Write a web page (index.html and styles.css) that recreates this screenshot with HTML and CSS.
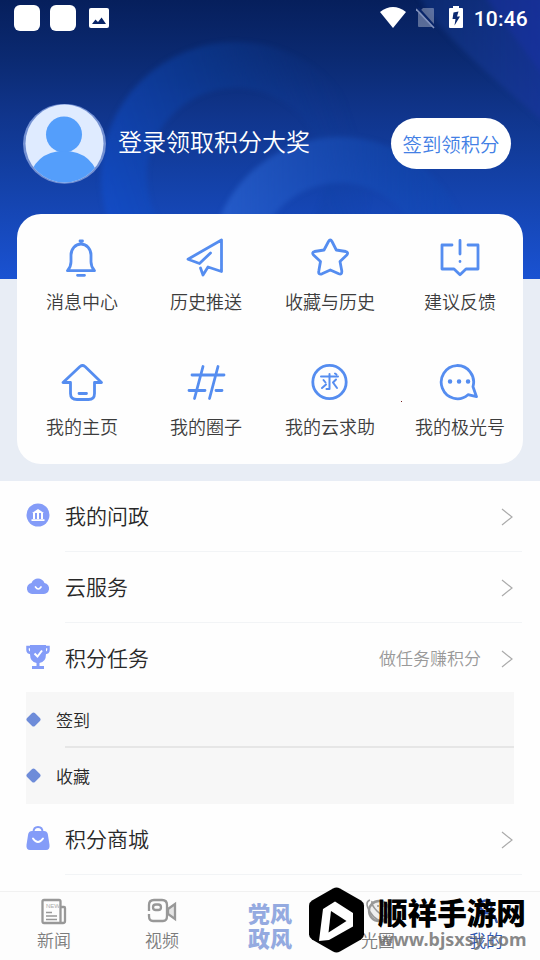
FILE: index.html
```html
<!DOCTYPE html>
<html lang="zh-CN">
<head>
<meta charset="utf-8">
<title>我的</title>
<link rel="stylesheet" href="styles.css">
</head>
<body>
<div class="screen">
  <header class="hero">
    <svg class="hero-art" viewBox="0 0 540 279" width="540" height="279">
      <defs>
        <linearGradient id="ring" gradientUnits="userSpaceOnUse" x1="100" y1="190" x2="350" y2="110"><stop offset="0" stop-color="#1250d0" stop-opacity=".55"/><stop offset=".55" stop-color="#0c409f" stop-opacity=".45"/><stop offset="1" stop-color="#10409f" stop-opacity="0"/></linearGradient>
        <linearGradient id="ring2" gradientUnits="userSpaceOnUse" x1="220" y1="0" x2="450" y2="0"><stop offset="0" stop-color="#2d66d4" stop-opacity=".65"/><stop offset=".5" stop-color="#1c54c0" stop-opacity=".5"/><stop offset="1" stop-color="#0c4cb8" stop-opacity=".2"/></linearGradient>
        <linearGradient id="corner" x1="0" y1="0" x2="1" y2="0"><stop offset="0" stop-color="#153c8e" stop-opacity=".4"/><stop offset="1" stop-color="#18359c" stop-opacity=".75"/></linearGradient>
        <filter id="soft" filterUnits="userSpaceOnUse" x="-20" y="-20" width="600" height="420" color-interpolation-filters="sRGB"><feGaussianBlur stdDeviation="2.5"/></filter>
      </defs>
      <g filter="url(#soft)">
        <circle cx="236" cy="177" r="112" fill="none" stroke="url(#ring)" stroke-width="46"/>
        <circle cx="340" cy="267" r="107" fill="none" stroke="url(#ring2)" stroke-width="46"/>
        <path d="M418 -5C440 35 490 75 550 128V-5Z" fill="url(#corner)"/>
        <path d="M484 -5Q520 45 550 85V-5Z" fill="#1c33aa" opacity=".4"/>
      </g>
    </svg>
    <div class="status">
      <span class="app-square"></span><span class="app-square"></span>
      <svg class="pic" width="20" height="20" viewBox="0 0 20 20"><rect width="20" height="20" rx="2" fill="#fff"/><path d="M3 16 6.500 11.500l2.500 2.500L12.600 9.500 17 16Z" fill="#082466"/></svg>
      <span class="grow"></span>
      <svg class="wifi" width="26" height="21" viewBox="0 0 26 21"><path d="M0 5Q13-5 26 5L13 21Z" fill="#fff"/></svg>
      <svg class="sim" width="20" height="22" viewBox="0 0 20 22"><path d="M7 1h10q1 0 1 1v17q0 1-1 1H3q-1 0-1-1V6Z" fill="#fff" opacity=".33"/><path d="M2 1 20 21" stroke="#09256a" stroke-width="2.500"/><path d="M0 2 18 21" stroke="#8292bd" stroke-width="1.600"/></svg>
      <svg class="battery" width="14" height="22" viewBox="0 0 14 22"><path d="M4 0h6v2h3q1 0 1 1v18q0 1-1 1H1q-1 0-1-1V3q0-1 1-1h3Z" fill="#fff"/><path d="M9.500 5.500 4.500 6.500 3.500 13h3L5.500 19.500 11 10.500H8Z" fill="#0a2870"/></svg>
      <span class="clock">10:46</span>
    </div>
    <div class="profile">
      <svg class="avatar" width="84" height="82" viewBox="0 0 84 82"><defs><clipPath id="face"><ellipse cx="41.500" cy="39.500" rx="39" ry="39"/></clipPath></defs><ellipse cx="41.500" cy="39.800" rx="41.500" ry="40" fill="#7390d2"/><g clip-path="url(#face)"><rect width="84" height="82" fill="#dfebff"/><circle cx="41" cy="30.500" r="18" fill="#549efb"/><path d="M4 82Q10 47 41 47T78 82Z" fill="#549efb"/></g></svg>
      <span class="login">登录领取积分大奖</span>
      <button class="sign">签到领积分</button>
    </div>
  </header>

  <section class="card">
    <div class="tile"><svg width="44" height="44" viewBox="0 0 44 44"><path d="M20 5h2.500M17.500 39.300h7M7.500 34.700h27q-3.500-4-3.500-9V19a10 11 0 0 0-20 0v6.700q0 5-3.500 9Z"/></svg><span>消息中心</span></div>
    <div class="tile"><svg width="44" height="44" viewBox="0 0 44 44"><path d="M26.500 17 15.500 27.500 4 23.200 37.500 4V35.500L24 31 19 39 16.500 32"/></svg><span>历史推送</span></div>
    <div class="tile"><svg width="44" height="44" viewBox="0 0 44 44"><path d="M20.500 5.500q1.800-3 3.500 0l4.300 8.500 9.500 1.500q3 .8 1 3.500L32 25.500 33.800 35q.2 4-3 2.800L22.300 34 14 37.800q-4 1-3.200-2.800L12.500 25.500 5.500 19q-2-2.700 1-3.500L16 14Z"/></svg><span>收藏与历史</span></div>
    <div class="tile"><svg width="44" height="44" viewBox="0 0 44 44"><path d="M14 9H4v24h12l6 5.800 6-5.800h12V9H30M22 4.500v13.500M22 25.500v.1"/></svg><span>建议反馈</span></div>
    <div class="tile"><svg width="44" height="44" viewBox="0 0 44 44"><path d="M10.500 21.500H3L20 5.500q2.500-2 5 0L41.500 21.500H34.500V32.500q0 6-6 6H17q-6.500 0-6.500-6ZM19 32.500h7.500"/></svg><span>我的主页</span></div>
    <div class="tile"><svg width="44" height="44" viewBox="0 0 44 44"><path d="M19 5.500 10.500 37.500M34 5.500 25.500 37.500M8 14h32M5 29.500h16M32 29.500h6"/></svg><span>我的圈子</span></div>
    <div class="tile"><svg width="44" height="44" viewBox="0 0 44 44"><circle cx="21.500" cy="21" r="16.700"/><path d="M13 15.500h17M21.500 13v15h-3M27 12.500l1.500 1M15.500 19l2 2.500M14 27l4-3.500M28 18.500l-3 3 4 5.500" stroke-width="2"/></svg><span>我的云求助</span></div>
    <div class="tile"><svg width="44" height="44" viewBox="0 0 44 44"><path d="M30 34.500A16.200 16.600 0 1 1 35 26.500L38.500 36.500Z" transform="translate(0 -.8)"/><path d="M12 20.500h.1M21 20.500h.1M30 20.500h.1" stroke-width="4.400"/></svg><span>我的极光号</span></div>
    <i class="speck"></i>
  </section>

  <main class="list">
    <div class="row"><svg width="24" height="24" viewBox="0 0 24 24"><circle cx="12" cy="12" r="11.500" fill="#849cf8"/><path d="M6 10 12 6l6 4ZM7 10h2v6H7ZM11 10h2v6h-2ZM15 10h2v6h-2ZM5.500 16.200h13V18h-13Z" fill="#fff"/></svg><span class="name">我的问政</span><svg class="arrow" width="12" height="18" viewBox="0 0 12 18"><path d="M1 1 11 9 1 17"/></svg></div>
    <div class="row"><svg width="24" height="24" viewBox="0 0 24 24"><path d="M7.500 20a5.500 5.500 0 0 1-2-11C7.500 3 16.500 3 18.500 9A5.500 5.500 0 0 1 16.500 20Z" fill="#849cf8"/><path d="M9.500 13q2.800 4 5.500 0" fill="none" stroke="#fff" stroke-width="1.700" stroke-linecap="round"/></svg><span class="name">云服务</span><svg class="arrow" width="12" height="18" viewBox="0 0 12 18"><path d="M1 1 11 9 1 17"/></svg></div>
    <div class="row last"><svg width="24" height="26" viewBox="0 0 24 26"><path d="M5 3H1.500v3q0 3 4 3M19 3h3.500v3q0 3-4 3" fill="none" stroke="#849cf8" stroke-width="2.500"/><path d="M4 1h16v9q0 8-6.500 9v3H18v3H6v-3h4.500v-3Q4 18 4 10Z" fill="#849cf8"/><path d="m8.500 9.500 3 3L16 6.500" fill="none" stroke="#fff" stroke-width="2"/></svg><span class="name">积分任务</span><span class="hint">做任务赚积分</span><svg class="arrow" width="12" height="18" viewBox="0 0 12 18"><path d="M1 1 11 9 1 17"/></svg></div>
    <div class="sub">
      <div class="subrow"><svg width="15" height="15" viewBox="0 0 15 15"><path d="M7.500 2.500 12.500 7.500 7.500 12.500 2.500 7.500Z"/></svg><span>签到</span></div>
      <div class="subrow"><svg width="15" height="15" viewBox="0 0 15 15"><path d="M7.500 2.500 12.500 7.500 7.500 12.500 2.500 7.500Z"/></svg><span>收藏</span></div>
    </div>
    <div class="row"><svg width="24" height="26" viewBox="0 0 24 26"><path d="M7.500 7q0-5 4.500-5t4.500 5" fill="none" stroke="#849cf8" stroke-width="2"/><path d="M6 6h12q3 0 3.800 3L23.500 20q.5 5-3.500 5H4q-4 0-3.500-5L2.200 9Q3 6 6 6Z" fill="#849cf8"/><path d="M7 13.500q5 7 10 0" fill="none" stroke="#fff" stroke-width="2" stroke-linecap="round"/></svg><span class="name">积分商城</span><svg class="arrow" width="12" height="18" viewBox="0 0 12 18"><path d="M1 1 11 9 1 17"/></svg></div>
  </main>

  <nav class="tabs">
    <div class="tab"><svg width="28" height="28" viewBox="0 0 28 28"><path d="M4 2h15q1.500 0 1.500 1.500V25H4q-1.500 0-1.500-1.500v-20Q2.500 2 4 2ZM20.500 9H24q1 0 1 1v13q0 2-2 2h-3"/><path d="M6 14.500h6M6 18h11M6 21.500h11" stroke-width="1.600"/><text x="6" y="10">NEW</text></svg><span>新闻</span></div>
    <div class="tab"><svg width="32" height="28" viewBox="0 0 32 28"><path d="M22 11l7-5v15l-7-5Z" fill="#e4e4e4"/><path d="M3 13V7q0-5 5-5h8q5 0 5 5v11q0 5-4 5H7q-4 0-4-5v-2"/><rect x="7" y="6.500" width="8" height="5.500" rx="2.750"/></svg><span>视频</span></div>
    <div class="tab party"><b>党风</b><b>政风</b></div>
    <div class="tab"><svg width="28" height="28" viewBox="0 0 28 28"><circle cx="15" cy="13" r="10" fill="#eee"/><path d="M6 2q-6 2 0 12t17 10M8 3q-1 4 5 10t11 6M14 7v2M19 6v3" stroke-width="1.600"/></svg><span>光圈</span></div>
    <div class="tab active"><svg width="28" height="28" viewBox="0 0 28 28"><circle cx="14" cy="8" r="5.500"/><path d="M3 25q2-10 11-10t11 10"/></svg><span>我的</span></div>
  </nav>

  <div class="watermark">
    <svg width="56" height="66" viewBox="0 0 56 66"><path d="M24 1.500q3.500-2 7 0l21 12q3 2 3 5v29q0 3-3 5l-21 12q-3.500 2-7 0l-21-12q-3-2-3-5v-29q0-3 3-5Z" fill="#000"/><path d="M14 22 26 14.500 44 26V39.500L20 53 10 54Z" fill="#fff"/><path d="M22 24 37.500 34 19.500 45.500Z" fill="#000"/></svg>
    <div class="brand"><strong>顺祥手游网</strong><span>www.bjsxsy.com</span></div>
  </div>
</div>
</body>
</html>
```

FILE: styles.css
```css
* { box-sizing: border-box; }
body { margin: 0; font-family: "Noto Sans CJK SC", sans-serif; font-weight: 350; }
svg { display: block; flex: none; }
.screen { position: relative; width: 540px; height: 960px; overflow: hidden; background: #e8edf5; }
.hero { position: relative; height: 279px; background: linear-gradient(#061f5c 0, #0b2a72 60px, #10358c 115px, #1340a5 175px, #1a52d2 279px); }
.hero-art { position: absolute; inset: 0; }
.status { position: relative; display: flex; align-items: center; height: 36px; padding: 0 12px 0 14px; }
.app-square { width: 26px; height: 26px; margin-right: 10px; border-radius: 6px; background: #fff; }
.pic { margin-left: 3px; }
.grow { flex: 1; }
.wifi { margin: -2px 10px 0 0; }
.sim { margin-right: 13px; }
.battery { margin: -2px 11px 0 0; }
.clock { color: #fff; font: 500 21px/36px Roboto, sans-serif; letter-spacing: .2px; padding-top: 1px; }
.profile { position: relative; display: flex; align-items: center; height: 82px; margin-top: 68px; padding: 0 29px 0 23px; }
.login { flex: 1; margin: -8px 0 0 11px; color: #fff; font-size: 24px; line-height: 36px; }
.sign { width: 120px; height: 51px; margin-top: -3px; padding: 0; border: 0; border-radius: 26px; background: #fff; color: #4380e5; font: 350 19.4px/51px "Noto Sans CJK SC", sans-serif; }
.card { position: relative; display: grid; grid-template-columns: 124px 124px 124px 131px; grid-template-rows: 125px 125px; width: 506px; height: 250px; margin: -65px 0 0 17px; padding-left: 3px; border-radius: 24px; background: #fefefe; }
.tile { display: flex; flex-direction: column; align-items: center; padding-top: 22px; }
.tile:nth-child(4n) { padding-left: 5px; }
.tile svg { fill: none; stroke: #558df0; stroke-width: 2.8; stroke-linecap: round; stroke-linejoin: round; }
.tile span { margin-top: 8px; color: #3c3c3c; font-size: 18px; line-height: 26px; white-space: nowrap; }
.speck { position: absolute; left: 384px; top: 187px; width: 1px; height: 1px; background: #722; }
.list { height: 411px; margin-top: 17px; background: #fefefe; }
.row { position: relative; display: flex; align-items: center; height: 71px; padding: 0 27px 0 26px; }
.row > svg:first-child { margin-top: -3px; }
.row::after { content: ""; position: absolute; left: 65px; right: 18px; bottom: 0; height: 1px; background: #f2f4f6; }
.row.last::after { display: none; }
.row.last { height: 69px; padding-top: 2px; }
.name { flex: 1; margin: -3px 0 0 15px; color: #282828; font-size: 21px; line-height: 32px; }
.hint { margin: -3px 20px 0 0; color: #999; font-size: 17px; }
.arrow { fill: none; stroke: #aaa; stroke-width: 1.2; }
.sub { width: 488px; height: 112px; margin-left: 26px; background: #f7f7f7; }
.subrow { position: relative; display: flex; align-items: center; height: 56px; gap: 15px; padding-bottom: 2px; color: #282828; font-size: 17px; }
.subrow svg { fill: #6e8cd9; stroke: #6e8cd9; stroke-width: 4; stroke-linejoin: round; }
.subrow:first-child::after { content: ""; position: absolute; left: 39px; right: 0; bottom: 0; height: 2px; background: #e6e6e6; }
.tabs { display: grid; grid-template-columns: repeat(5, 108px); height: 69px; margin-top: -1px; border-top: 1px solid #f1f1f1; background: #fdfdfd; }
.tab { display: flex; flex-direction: column; align-items: center; padding-top: 6px; color: #7c7c7c; font-size: 17px; line-height: 24px; }
.tab svg { fill: none; stroke: #989898; stroke-width: 2.3; }
.tab svg text { fill: #aaa; stroke: none; font: 6px "Liberation Sans", sans-serif; }
.tab span { margin-top: 2px; }
.party { padding-top: 8px; color: #94aae0; }
.party b { font-size: 22px; font-weight: 900; line-height: 25px; }
.tab.active { color: #3056b0; }
.tab.active svg { stroke: #3056b0; }
.watermark { position: absolute; left: 309px; top: 887px; display: flex; gap: 13px; }
.brand { display: flex; flex-direction: column; width: 150px; white-space: nowrap; }
.brand strong { color: #000; font-size: 29.6px; font-weight: 900; line-height: 34px; margin-top: 8px; }
.brand span { color: rgba(110,110,110,.82); font: bold 18px/20px "Noto Sans", sans-serif; }
```
